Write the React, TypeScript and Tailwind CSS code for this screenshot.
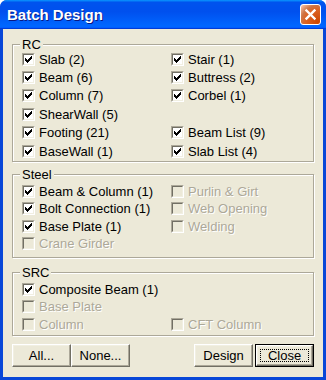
import React from "react";

type Item = { label: string; checked?: boolean; disabled?: boolean } | null;

function CheckBox({ checked, disabled }: { checked?: boolean; disabled?: boolean }) {
  return (
    <span className="block w-[13px] h-[13px] shrink-0 border border-t-[#ACA899] border-l-[#ACA899] border-b-white border-r-white">
      <span
        className={`relative block w-full h-full border border-t-[#716F64] border-l-[#716F64] border-b-[#F1EFE2] border-r-[#F1EFE2] ${
          disabled ? "bg-[#ECE9D8]" : "bg-white"
        }`}
      >
        {checked && (
          <svg
            width="7"
            height="7"
            viewBox="0 0 7 7"
            className="absolute left-[1px] top-[1px]"
            shapeRendering="crispEdges"
          >
            <path
              d="M0 2h1v3H0z M1 3h1v3H1z M2 4h1v3H2z M3 3h1v3H3z M4 2h1v3H4z M5 1h1v3H5z M6 0h1v3H6z"
              fill="#000"
            />
          </svg>
        )}
      </span>
    </span>
  );
}

function Row({ item, h }: { item: Item; h: string }) {
  if (!item) return <div className={h} />;
  return (
    <div className={`flex items-center gap-[4px] ${h}`}>
      <CheckBox checked={item.checked} disabled={item.disabled} />
      <span
        className={`whitespace-nowrap leading-[13px] ${
          item.disabled ? "text-[#ACA899] [text-shadow:1px_1px_0_#fff]" : "text-black"
        }`}
      >
        {item.label}
      </span>
    </div>
  );
}

function Group({
  title,
  items,
  rowH,
  className,
}: {
  title: string;
  items: Item[];
  rowH: string;
  className: string;
}) {
  return (
    <div
      className={`relative border border-[#ACA899] shadow-[1px_1px_0_#fff,inset_1px_1px_0_#fff] pl-[9px] ${className}`}
    >
      <span className="absolute left-[7px] top-[-7px] px-[2px] bg-[#ECE9D8] leading-[13px] text-black">
        {title}
      </span>
      <div className="grid grid-cols-[149px_1fr]">
        {items.map((it, i) => (
          <Row key={i} item={it} h={rowH} />
        ))}
      </div>
    </div>
  );
}

function Btn({ children, def, className }: { children: React.ReactNode; def?: boolean; className: string }) {
  const inner = (
    <div className="h-full w-full flex items-center justify-center border border-t-white border-l-white border-b-[#716F64] border-r-[#716F64] shadow-[inset_-1px_-1px_0_#ACA899,inset_1px_1px_0_#F1EFE2] bg-[#ECE9D8]">
      {def ? (
        <span className="px-[7px] border border-dotted border-black leading-[13px] h-[15px] flex items-center w-[calc(100%-6px)] h-[calc(100%-6px)] justify-center">
          {children}
        </span>
      ) : (
        <span className="leading-[13px]">{children}</span>
      )}
    </div>
  );
  return (
    <div className={`h-[23px] ${def ? "border border-black" : ""} ${className}`}>{inner}</div>
  );
}

export default function App() {
  const rc: Item[] = [
    { label: "Slab (2)", checked: true },
    { label: "Stair (1)", checked: true },
    { label: "Beam (6)", checked: true },
    { label: "Buttress (2)", checked: true },
    { label: "Column (7)", checked: true },
    { label: "Corbel (1)", checked: true },
    { label: "ShearWall (5)", checked: true },
    null,
    { label: "Footing (21)", checked: true },
    { label: "Beam List (9)", checked: true },
    { label: "BaseWall (1)", checked: true },
    { label: "Slab List (4)", checked: true },
  ];
  const steel: Item[] = [
    { label: "Beam & Column (1)", checked: true },
    { label: "Purlin & Girt", disabled: true },
    { label: "Bolt Connection (1)", checked: true },
    { label: "Web Opening", disabled: true },
    { label: "Base Plate (1)", checked: true },
    { label: "Welding", disabled: true },
    { label: "Crane Girder", disabled: true },
    null,
  ];
  const src: Item[] = [
    { label: "Composite Beam (1)", checked: true },
    null,
    { label: "Base Plate", disabled: true },
    null,
    { label: "Column", disabled: true },
    { label: "CFT Column", disabled: true },
  ];

  return (
    <div className="w-[326px] h-[380px] bg-white font-['Liberation_Sans',Arial,sans-serif] text-[13px]">
      <div className="w-full h-full flex flex-col rounded-t-[7px] overflow-hidden bg-[#0847D8]">
        {/* Title bar */}
        <div className="h-[29px] shrink-0 flex items-center justify-between pl-[7px] pr-[5px] bg-[linear-gradient(180deg,#0997ff,#0053ee_8%,#0050ee_40%,#06f_88%,#06f_93%,#005bff_95%,#003dd7_96%,#003dd7)]">
          <span className="text-white font-bold text-[15px] leading-[18px] [text-shadow:1px_1px_0_#0a1883]">
            Batch Design
          </span>
          <div className="w-[21px] h-[21px] rounded-[3px] border border-white bg-[radial-gradient(circle_at_90%_90%,#cc4600_0%,#dc6527_55%,#cd7546_70%,#ffccb2_100%)] flex items-center justify-center">
            <svg width="13" height="13" viewBox="0 0 13 13">
              <path d="M2.5 2.5 L10.5 10.5 M10.5 2.5 L2.5 10.5" stroke="#fff" strokeWidth="2.4" strokeLinecap="square" />
            </svg>
          </div>
        </div>
        {/* Client */}
        <div className="flex-1 mx-[3px] mb-[3px] bg-[#ECE9D8] px-[9px] pt-[15px] flex flex-col">
          <Group title="RC" items={rc} rowH="h-[18.4px]" className="pt-[5px] pb-[1px]" />
          <Group title="Steel" items={steel} rowH="h-[17.5px]" className="mt-[12px] pt-[7px] pb-[5px]" />
          <Group title="SRC" items={src} rowH="h-[17.5px]" className="mt-[14px] pt-[7px] pb-[2px]" />
          <div className="flex mt-[8px]">
            <Btn className="w-[59px]">All...</Btn>
            <Btn className="w-[59px]">None...</Btn>
            <div className="flex-1" />
            <Btn className="w-[59px] mr-[2px]">Design</Btn>
            <Btn className="w-[59px]" def>
              Close
            </Btn>
          </div>
        </div>
      </div>
    </div>
  );
}
